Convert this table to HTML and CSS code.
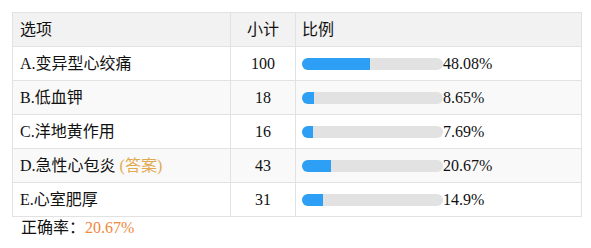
FILE: index.html
```html
<!DOCTYPE html>
<html lang="zh-CN">
<head>
<meta charset="utf-8">
<link rel="stylesheet" href="styles.css">
</head>
<body>
<div class="wrap">
  <table class="stat">
    <colgroup>
      <col class="c1"><col class="c2"><col class="c3">
    </colgroup>
    <thead>
      <tr><th>选项</th><th class="num">小计</th><th class="pct">比例</th></tr>
    </thead>
    <tbody>
      <tr><td>A.变异型心绞痛</td><td class="num">100</td><td class="pct"><div class="ratio"><div class="bar"><div class="fill" style="width:48.08%"></div></div><span>48.08%</span></div></td></tr>
      <tr><td>B.低血钾</td><td class="num">18</td><td class="pct"><div class="ratio"><div class="bar"><div class="fill" style="width:8.65%"></div></div><span>8.65%</span></div></td></tr>
      <tr><td>C.洋地黄作用</td><td class="num">16</td><td class="pct"><div class="ratio"><div class="bar"><div class="fill" style="width:7.69%"></div></div><span>7.69%</span></div></td></tr>
      <tr><td>D.急性心包炎 <span class="answer">(答案)</span></td><td class="num">43</td><td class="pct"><div class="ratio"><div class="bar"><div class="fill" style="width:20.67%"></div></div><span>20.67%</span></div></td></tr>
      <tr><td>E.心室肥厚</td><td class="num">31</td><td class="pct"><div class="ratio"><div class="bar"><div class="fill" style="width:14.9%"></div></div><span>14.9%</span></div></td></tr>
    </tbody>
  </table>
  <div class="rate">正确率：<span class="rate-val">20.67%</span></div>
</div>
</body>
</html>
```

FILE: styles.css
```css
html, body {
  margin: 0;
  padding: 0;
  background: #fff;
}
body {
  font-family: "Liberation Serif", "Noto Sans CJK SC", serif;
  font-size: 16px;
  color: #111;
}
.wrap {
  padding: 12px 0 0 12px;
}
.stat {
  border-collapse: collapse;
  width: 569px;
  table-layout: fixed;
}
.c1 { width: 218px; }
.c2 { width: 65px; }
.c3 { width: 286px; }
.stat th, .stat td {
  border: 1px solid #e2e2e2;
  height: 33px;
  line-height: 33px;
  padding: 0 0 0 7px;
  text-align: left;
  font-weight: normal;
  white-space: nowrap;
}
.stat th {
  background: #f2f2f2;
}
.stat .num {
  text-align: center;
  padding: 0;
}
.stat .pct {
  padding-left: 6px;
}
.stat tbody tr:nth-child(even) td {
  background: #f9f9f9;
}
.ratio {
  display: flex;
  align-items: center;
  height: 33px;
}
.bar {
  width: 141px;
  height: 12px;
  border-radius: 6px;
  background: #e2e2e2;
  overflow: hidden;
  flex: none;
}
.fill {
  height: 100%;
  background: #2d9ff4;
}
.answer {
  color: #e3a94f;
}
.rate {
  padding-left: 9px;
  line-height: 22px;
}
.rate-val {
  color: #f0883a;
}
```
